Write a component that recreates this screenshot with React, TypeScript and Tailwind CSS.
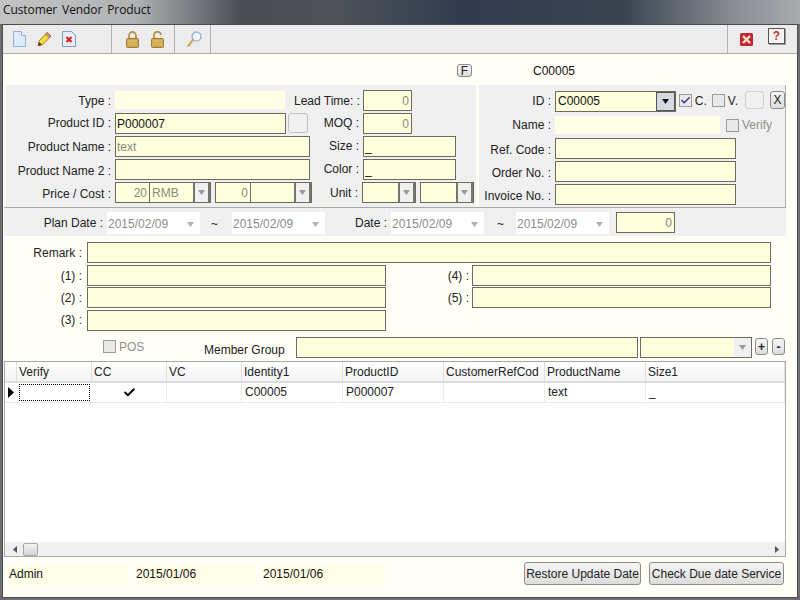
import type { ReactNode } from "react";
import { Check } from "lucide-react";

const ivory = "bg-[#ffffdd]";

function Label({ className = "", children }: { className?: string; children: ReactNode }) {
  return <div className={`shrink-0 text-right text-[12px] leading-[21px] text-[#222] whitespace-nowrap ${className}`}>{children}</div>;
}

// plain bordered text box
function Box({ className = "", value = "", right = false, grey = false }: { className?: string; value?: string; right?: boolean; grey?: boolean }) {
  return (
    <div
      className={`shrink-0 h-[21px] border border-[#6b6b5e] ${ivory} px-[1px] text-[12px] leading-[20px] whitespace-nowrap overflow-hidden ${right ? "text-right pr-[2px]" : ""} ${grey ? "text-[#8a8a80]" : "text-[#111]"} ${className}`}
    >
      {value}
    </div>
  );
}

function Arrow({ color = "#9a9a9a" }: { color?: string }) {
  return (
    <svg width="9" height="5" viewBox="0 0 9 5">
      <path d="M1 0h7L4.500 5z" fill={color} />
    </svg>
  );
}

function Combo({ className = "", value = "", plain = false }: { className?: string; value?: string; plain?: boolean }) {
  return (
    <div className={`shrink-0 h-[21px] flex border border-[#6b6b5e] ${ivory} text-[12px] leading-[20px] text-[#8a8a80] ${className}`}>
      <div className="flex-1 px-[2px] overflow-hidden">{value}</div>
      <div className={`w-[17px] bg-[#f0f0f0] flex items-center justify-center ${plain ? "" : "border-2 border-y-0 border-[#77776f]"}`}>
        <Arrow />
      </div>
    </div>
  );
}

function DateBox({ className = "" }: { className?: string }) {
  return (
    <div className={`shrink-0 h-[22px] w-[93px] flex items-center justify-between bg-white pl-[1px] pr-[5px] pt-[2px] text-[12px] text-[#8c8c8c] ${className}`}>
      <span>2015/02/09</span>
      <Arrow color="#b0b0b0" />
    </div>
  );
}

function CheckBox({ checked = false, className = "" }: { checked?: boolean; className?: string }) {
  return (
    <div className={`shrink-0 w-[13px] h-[13px] border border-[#9a9a9a] bg-[#e9e9e9] flex items-center justify-center ${className}`}>
      {checked && <Check size={11} strokeWidth={3.5} className="text-[#39418f]" />}
    </div>
  );
}

function SmallButton({ className = "", children }: { className?: string; children?: ReactNode }) {
  return (
    <div className={`shrink-0 border border-[#8b8b8b] rounded-[3px] bg-gradient-to-b from-[#f6f6f6] to-[#dcdcdc] flex items-center justify-center text-[12px] text-[#222] ${className}`}>
      {children}
    </div>
  );
}

function PageIcon() {
  return (
    <svg width="13" height="16" viewBox="0 0 13 16">
      <path d="M.5.5h8l4 4v11H.5z" fill="#dcebfa" stroke="#8fb2d6" />
      <path d="M8.500.5v4h4" fill="#fff" stroke="#8fb2d6" />
    </svg>
  );
}

function PencilIcon() {
  return (
    <svg width="15" height="16" viewBox="0 0 15 16">
      <path d="M1 15l1-5L10 1.500l4 3.500L6 13.500z" fill="#f5d93a" stroke="#8b6b1c" strokeWidth="0.8" />
      <path d="M10 1.500l4 3.500-1.500 1.700-4-3.500z" fill="#e08f7a" stroke="#8b5a3c" strokeWidth="0.6" />
      <path d="M1 15l1-4 3 2.600z" fill="#4a3a20" />
    </svg>
  );
}

function DocDeleteIcon() {
  return (
    <svg width="14" height="16" viewBox="0 0 14 16">
      <path d="M.5.5h9l4 4v11H.5z" fill="#e6eefb" stroke="#7f9cc9" />
      <path d="M4.500 6l5 5M9.500 6l-5 5" stroke="#d8202a" strokeWidth="2.200" />
    </svg>
  );
}

function LockIcon({ open = false }: { open?: boolean }) {
  return (
    <svg width="13" height="17" viewBox="0 0 13 17">
      <path
        d={open ? "M3 8V4.500a3.500 3.500 0 0 1 7-0.500" : "M3 8V4.500a3.500 3.500 0 0 1 7 0V8"}
        fill="none"
        stroke="#b9924a"
        strokeWidth="1.800"
      />
      <rect x="0.500" y="7.500" width="12" height="9" rx="1" fill="#cfa650" stroke="#a07c34" />
      <path d="M1.500 10h10M1.500 13h10" stroke="#e6c67c" />
    </svg>
  );
}

function SearchIcon() {
  return (
    <svg width="15" height="16" viewBox="0 0 15 16">
      <circle cx="9.500" cy="5.500" r="4.500" fill="#eef6fd" stroke="#7fa6c9" strokeWidth="1.200" />
      <path d="M6 9l-4.500 5.500" stroke="#d0a860" strokeWidth="2.400" strokeLinecap="round" />
    </svg>
  );
}

function CloseIcon() {
  return (
    <svg width="13" height="13" viewBox="0 0 13 13">
      <rect width="13" height="13" rx="1.500" fill="#c6262e" />
      <path d="M3 3l7 7M10 3l-7 7" stroke="#f7e3c8" strokeWidth="2.400" />
    </svg>
  );
}

const columns = [
  { name: "Verify", w: "w-[75px]" },
  { name: "CC", w: "w-[75px]" },
  { name: "VC", w: "w-[75px]" },
  { name: "Identity1", w: "w-[101px]" },
  { name: "ProductID", w: "w-[101px]" },
  { name: "CustomerRefCod", w: "w-[101px]" },
  { name: "ProductName", w: "w-[101px]" },
  { name: "Size1", w: "flex-1" },
];

const cellText: Record<string, string> = {
  Identity1: "C00005",
  ProductID: "P000007",
  ProductName: "text",
  Size1: "_",
};

export default function App() {
  return (
    <div className="w-[800px] h-[600px] flex flex-col overflow-hidden bg-[#6a6d72] font-['Liberation_Sans',Arial,sans-serif]">
      {/* title bar */}
      <div className="h-[24px] shrink-0 bg-[linear-gradient(90deg,#c4c4c4_0%,#b0b2b4_17%,#4a4e54_30%,#4e5258_42%,#2f3c4e_58%,#3a4450_78%,#8b8f94_92%,#a8abae_100%)] px-[3px] font-['Open_Sans',sans-serif] text-[12px] leading-[20px] tracking-[-0.1px] text-[#111] [word-spacing:2px]">
        Customer Vendor Product
      </div>

      <div className="flex-1 min-h-0 mx-[2px] mb-[2px] border border-[#4c4c4c] bg-[#fffff8] flex flex-col">
        {/* toolbar */}
        <div className="h-[29px] shrink-0 bg-[#ececec] border-b border-[#a8a8a8] flex items-center">
          <div className="w-[109px] h-full pl-[10px] flex items-center border-r border-[#b0b0b0]">
            <PageIcon />
            <div className="ml-[11px]"><PencilIcon /></div>
            <div className="ml-[10px]"><DocDeleteIcon /></div>
          </div>
          <div className="w-[63px] h-full pl-[14px] flex items-center gap-[12px] border-r border-[#b0b0b0]">
            <LockIcon />
            <LockIcon open />
          </div>
          <div className="w-[36px] h-full pl-[12px] flex items-center border-r border-[#b0b0b0]">
            <SearchIcon />
          </div>
          <div className="flex-1" />
          <div className="w-[70px] h-full border-l border-[#b0b0b0] flex items-start">
            <div className="ml-[12px] mt-[8px]"><CloseIcon /></div>
            <div className="ml-[15px] mt-[3px] w-[17px] h-[16px] border border-[#555] bg-[#f4f4f4] text-center text-[12px] leading-[14px] font-bold text-[#c8322c] shadow-[1px_1px_0_#999]">?</div>
          </div>
        </div>

        {/* record header */}
        <div className="h-[31px] shrink-0 flex items-center pt-[2px]">
          <SmallButton className="ml-[454px] w-[15px] h-[13px] border-[#6a6a6a] text-[10px]">F</SmallButton>
          <div className="ml-[61px] text-[12px] text-[#111]">C00005</div>
        </div>

        {/* main form */}
        <div className="h-[122px] shrink-0 flex pl-[3px]">
          <div className="w-[470px] bg-[#f0f0f0] pt-[5px] pr-[2px] flex flex-col gap-[2px]">
            <div className="h-[21px] flex gap-[4px]">
              <Label className="w-[105px] pt-[1px]">Type :</Label>
              <div className="w-[170px] h-[18px] mt-[1px] bg-[#ffffe6]" />
              <Label className="w-[67px] ml-[4px] pt-[1px]">Lead Time: :</Label>
              <Box className="w-[49px] ml-[-1px]" value="0" right grey />
            </div>
            <div className="h-[21px] flex gap-[4px]">
              <Label className="w-[105px]">Product ID :</Label>
              <Box className="w-[171px]" value="P000007" />
              <SmallButton className="w-[20px] h-[20px] ml-[-2px] bg-none bg-[#f0f0f0] border-[#c0c0c0]" />
              <Label className="w-[40px] ml-[7px]">MOQ :</Label>
              <Box className="w-[49px]" value="0" right grey />
            </div>
            <div className="h-[21px] flex gap-[4px]">
              <Label className="w-[105px] pt-[1px]">Product Name :</Label>
              <Box className="w-[195px]" value="text" grey />
              <Label className="w-[45px]">Size :</Label>
              <Box className="w-[93px]" value="_" />
            </div>
            <div className="h-[21px] flex gap-[4px]">
              <Label className="w-[105px] pt-[2px]">Product Name 2 :</Label>
              <Box className="w-[195px]" />
              <Label className="w-[45px]">Color :</Label>
              <Box className="w-[93px]" value="_" />
            </div>
            <div className="h-[21px] flex">
              <Label className="w-[105px] mr-[4px] pt-[2px]">Price / Cost :</Label>
              <Box className="w-[35px]" value="20" right grey />
              <Combo className="w-[62px] ml-[-1px]" value="RMB" />
              <Box className="w-[36px] ml-[4px]" value="0" right grey />
              <Combo className="w-[62px] ml-[-1px]" />
              <Label className="w-[46px] mr-[4px] pt-[1px]">Unit :</Label>
              <Combo className="w-[54px]" />
              <Combo className="w-[54px] ml-[4px]" />
            </div>
          </div>

          <div className="w-[307px] ml-[3px] bg-[#f0f0f0] border-r border-[#b0b0b0] pt-[6px] flex flex-col">
            <div className="h-[21px] flex items-start">
              <Label className="w-[72px] mr-[4px]">ID :</Label>
              <div className={`w-[122px] h-[21px] flex border border-[#6b6b5e] ${ivory} text-[12px] leading-[19px] text-[#111]`}>
                <div className="flex-1 px-[2px]">C00005</div>
                <div className="w-[19px] border border-[#555] bg-[#d6d9e0] flex items-center justify-center"><Arrow color="#111" /></div>
              </div>
              <CheckBox checked className="ml-[3px] mt-[3px]" />
              <span className="ml-[3px] text-[12px] leading-[21px] text-[#222]">C.</span>
              <CheckBox className="ml-[5px] mt-[3px]" />
              <span className="ml-[3px] text-[12px] leading-[21px] text-[#222]">V.</span>
              <SmallButton className="w-[19px] h-[18px] ml-[7px] bg-none bg-[#f0f0f0] border-[#d0d0d0]" />
              <SmallButton className="w-[15px] h-[18px] ml-[6px]">X</SmallButton>
            </div>
            <div className="h-[18px] mt-[4px] flex items-center">
              <Label className="w-[72px] mr-[4px]">Name :</Label>
              <div className="w-[165px] h-[18px] bg-[#ffffe6]" />
              <CheckBox className="ml-[6px]" />
              <span className="ml-[3px] text-[12px] text-[#8f8f8f]">Verify</span>
            </div>
            <div className="mt-[4px] flex flex-col gap-[2px]">
              {["Ref. Code :", "Order No. :", "Invoice No. :"].map((label) => (
                <div key={label} className="h-[21px] flex">
                  <Label className="w-[72px] mr-[4px] pt-[2px]">{label}</Label>
                  <Box className="w-[181px]" />
                </div>
              ))}
            </div>
          </div>
        </div>

        {/* date bar */}
        <div className="h-[29px] shrink-0 ml-[1px] w-[782px] border-t border-[#a8a8a8] bg-[#f0f0f0] flex items-start pt-[4px] text-[12px] text-[#222]">
          <Label className="w-[99px] mr-[4px] pt-[1px]">Plan Date :</Label>
          <DateBox />
          <span className="ml-[11px] w-[21px] leading-[21px] pt-[2px]">~</span>
          <DateBox />
          <Label className="w-[62px] mr-[4px] pt-[1px]">Date :</Label>
          <DateBox />
          <span className="ml-[13px] w-[19px] leading-[21px] pt-[2px]">~</span>
          <DateBox />
          <Box className="w-[59px] ml-[7px]" value="0" right grey />
        </div>

        {/* remarks */}
        <div className="h-[125px] shrink-0 pt-[6px] flex flex-col text-[12px]">
          <div className="h-[21px] flex">
            <Label className="w-[79px] mr-[5px] pt-[1px]">Remark :</Label>
            <Box className="w-[684px]" />
          </div>
          <div className="h-[21px] mt-[2px] flex">
            <Label className="w-[79px] mr-[5px] pt-[1px]">(1) :</Label>
            <Box className="w-[299px]" />
            <Label className="w-[83px] mr-[3px] pt-[1px]">(4) :</Label>
            <Box className="w-[299px]" />
          </div>
          <div className="h-[21px] mt-[1px] flex">
            <Label className="w-[79px] mr-[5px] pt-[1px]">(2) :</Label>
            <Box className="w-[299px]" />
            <Label className="w-[83px] mr-[3px] pt-[1px]">(5) :</Label>
            <Box className="w-[299px]" />
          </div>
          <div className="h-[21px] mt-[2px] flex">
            <Label className="w-[79px] mr-[5px]">(3) :</Label>
            <Box className="w-[299px]" />
          </div>
          <div className="h-[21px] mt-[6px] flex">
            <div className="ml-[100px] w-[101px] flex items-start gap-[3px] pt-[3px] text-[#8f8f8f]">
              <CheckBox />
              <span className="leading-[14px]">POS</span>
            </div>
            <div className="w-[82px] leading-[26px] text-[#222] whitespace-nowrap">Member Group</div>
            <Box className="w-[342px] ml-[10px]" />
            <Combo className="w-[112px] ml-[2px]" plain />
            <SmallButton className="w-[13px] h-[17px] ml-[3px] mt-[1px] font-bold">+</SmallButton>
            <SmallButton className="w-[13px] h-[17px] ml-[4px] mt-[1px] font-bold">-</SmallButton>
          </div>
        </div>

        {/* grid */}
        <div className="h-[196px] shrink-0 ml-[1px] w-[782px] border border-[#a8a8a8] bg-white flex flex-col text-[12px] text-[#222]">
          <div className="h-[21px] shrink-0 flex bg-gradient-to-b from-white to-[#f3f3f3] border-b-2 border-[#dcdcdc]">
            <div className="w-[12px] border-r border-[#e0e0e0]" />
            {columns.map((c) => (
              <div key={c.name} className={`${c.w} px-[2px] leading-[21px] border-r border-[#e0e0e0] whitespace-nowrap overflow-hidden`}>{c.name}</div>
            ))}
          </div>
          <div className="h-[20px] shrink-0 flex border-b border-[#e8e8e8]">
            <div className="w-[12px] flex items-center justify-center">
              <svg width="6" height="11" viewBox="0 0 6 11"><path d="M0 0l6 5.500L0 11z" fill="#000" /></svg>
            </div>
            {columns.map((c) =>
              c.name === "Verify" ? (
                <div key={c.name} className="w-[71px] mx-[2px] my-[1px] border border-dotted border-black" />
              ) : (
                <div
                  key={c.name}
                  className={`${c.w} px-[3px] leading-[19px] border-r border-[#ececec] flex items-center ${c.name === "CC" ? "justify-center" : ""}`}
                >
                  {c.name === "CC" ? <Check size={13} strokeWidth={3.5} className="text-black" /> : cellText[c.name] ?? ""}
                </div>
              )
            )}
          </div>
          <div className="flex-1" />
          <div className="h-[14px] shrink-0 bg-[#f0f0f0] flex items-center pl-[8px] pr-[6px]">
            <svg width="4" height="7" viewBox="0 0 4 7"><path d="M4 0v7L0 3.500z" fill="#555" /></svg>
            <div className="ml-[6px] w-[15px] h-[13px] rounded-[2px] border border-[#a8a8a8] bg-gradient-to-b from-[#f4f4f4] to-[#d4d4d4]" />
            <div className="flex-1" />
            <svg width="4" height="7" viewBox="0 0 4 7"><path d="M0 0v7l4-3.500z" fill="#555" /></svg>
          </div>
        </div>

        {/* footer */}
        <div className="flex-1 min-h-0 flex items-start text-[12px] text-[#111]">
          <div className="w-[120px] h-[21px] mt-[8px] ml-[5px] px-[1px] bg-[#ffffe8] leading-[19px]">Admin</div>
          <div className="w-[120px] h-[21px] mt-[8px] ml-[8px] bg-[#ffffe8] leading-[19px]">2015/01/06</div>
          <div className="w-[120px] h-[21px] mt-[8px] ml-[7px] bg-[#ffffe8] leading-[19px]">2015/01/06</div>
          <SmallButton className="w-[117px] h-[23px] mt-[5px] ml-[141px] whitespace-nowrap overflow-hidden">Restore Update Date</SmallButton>
          <SmallButton className="w-[135px] h-[23px] mt-[5px] ml-[8px] whitespace-nowrap">Check Due date Service</SmallButton>
        </div>
      </div>
    </div>
  );
}
